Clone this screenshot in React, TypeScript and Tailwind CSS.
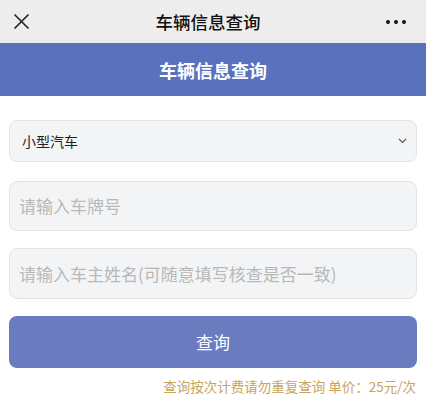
import React from 'react';

const font = { fontFamily: '"Noto Sans CJK SC", "Noto Sans", sans-serif' };

export default function App() {
  return (
    <div className="w-[426px] h-[400px] bg-white overflow-hidden flex flex-col" style={font}>
      {/* top nav */}
      <div className="h-[43px] bg-[#ededed] flex items-center justify-between px-[13px] shrink-0">
        <svg width="17" height="17" viewBox="0 0 17 17" className="text-[#222]">
          <path d="M1.5 1.5 L15.5 15.5 M15.5 1.5 L1.5 15.5" stroke="currentColor" strokeWidth="1.6" fill="none" />
        </svg>
        <div className="text-[17.5px] text-[#111] leading-none font-medium">车辆信息查询</div>
        <div className="flex items-center gap-[4px] pr-[7px]">
          <span className="w-[4px] h-[4px] rounded-full bg-[#111]" />
          <span className="w-[4px] h-[4px] rounded-full bg-[#111]" />
          <span className="w-[4px] h-[4px] rounded-full bg-[#111]" />
        </div>
      </div>

      {/* header */}
      <div className="h-[53px] bg-[#5a72be] flex items-center justify-center shrink-0">
        <div className="text-white text-[18px] font-bold leading-none">车辆信息查询</div>
      </div>

      {/* form */}
      <div className="flex flex-col px-[9px] pt-[24px]">
        <div className="h-[42px] rounded-[8px] border border-[#e3e4e8] bg-[#f3f4f6] flex items-center justify-between pl-[12px] pr-[9px]">
          <span className="text-[14px] text-[#222]">小型汽车</span>
          <svg width="9" height="6" viewBox="0 0 9 6">
            <path d="M1 1 L4.5 4.5 L8 1" stroke="#555" strokeWidth="1.1" fill="none" />
          </svg>
        </div>
        <div className="h-[50px] mt-[19px] rounded-[8px] border border-[#e3e4e8] bg-[#f3f4f6] flex items-center px-[9px]">
          <span className="text-[17px] text-[#b8b8b8]">请输入车牌号</span>
        </div>
        <div className="h-[51px] mt-[17px] rounded-[8px] border border-[#e3e4e8] bg-[#f3f4f6] flex items-center px-[9px]">
          <span className="text-[17px] text-[#b8b8b8]">请输入车主姓名(可随意填写核查是否一致)</span>
        </div>
        <button className="h-[52px] mt-[17px] rounded-[8px] bg-[#6a7bc0] text-white text-[17px] flex items-center justify-center">
          查询
        </button>
        <div className="mt-[12px] text-right text-[13.5px] text-[#c9a45c] leading-none pr-[1px]">
          查询按次计费请勿重复查询 单价：25元/次
        </div>
      </div>
    </div>
  );
}
